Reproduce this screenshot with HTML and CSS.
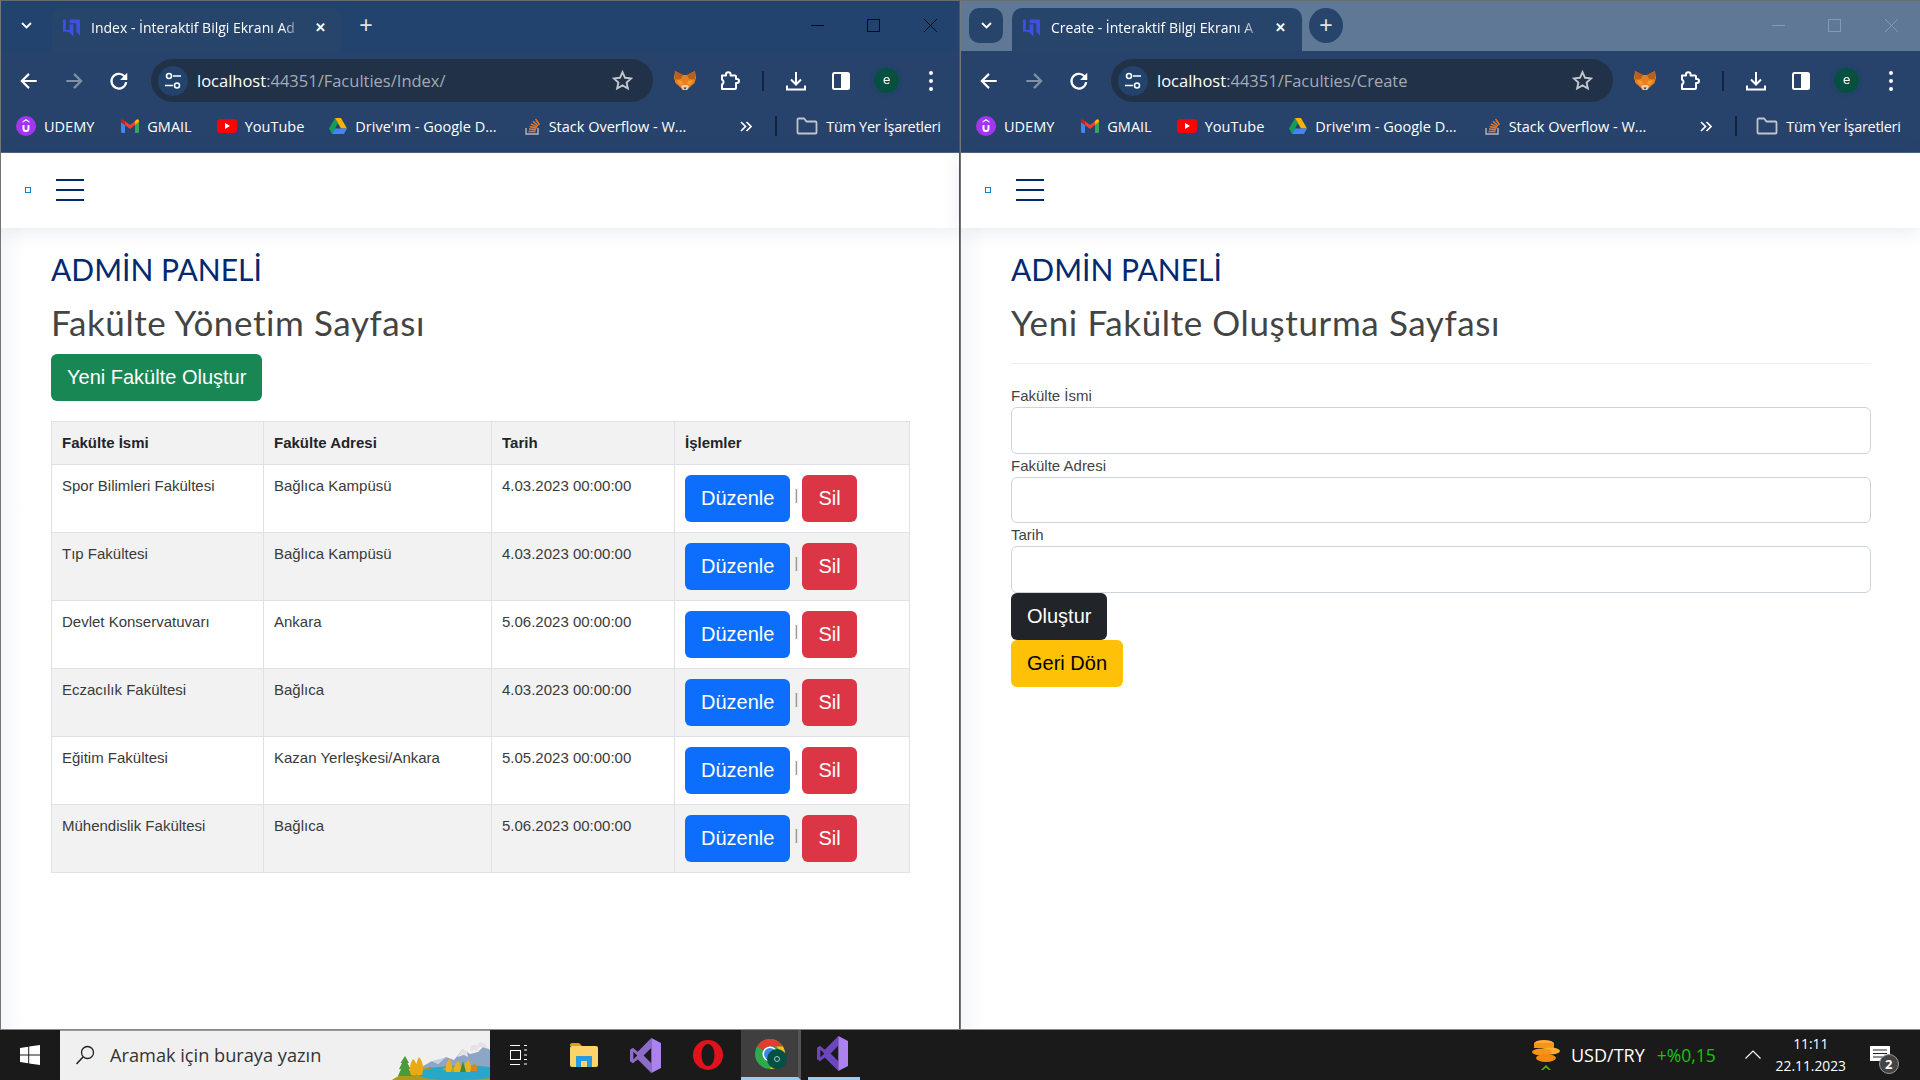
FILE: index.html
```html
<!DOCTYPE html>
<html lang="tr">
<head>
    <meta charset="UTF-8">
    <meta name="viewport" content="width=device-width, initial-scale=1.0">
    <title>Fakülte Yönetimi</title>
    <link rel="stylesheet" href="styles.css">
</head>
<body>
    <svg class="defs" width="0" height="0">
        <symbol id="i-fav" viewBox="0 0 20 20"><path d="M1 1v13h6l5 5V6H8v6H4V1zM8 1h11v17l-4-4V5H8z" fill="#3d50e0"/></symbol>
        <symbol id="i-back" viewBox="0 0 20 20"><path d="M17 10H4M10 3.500 3.500 10l6.500 6.500" fill="none" stroke="currentColor" stroke-width="2"/></symbol>
        <symbol id="i-fwd" viewBox="0 0 20 20"><path d="M3 10h13M10 3.500l6.500 6.500-6.500 6.500" fill="none" stroke="currentColor" stroke-width="2"/></symbol>
        <symbol id="i-reload" viewBox="0 0 20 20"><path d="M16.500 11a6.700 6.700 0 1 1-1.800-5.500L16.500 7.500" fill="none" stroke="#fff" stroke-width="2"/><path d="M17.500 2.500v6.500H11z" fill="#fff"/></symbol>
        <symbol id="i-tune" viewBox="0 0 30 30"><circle cx="15" cy="15" r="15" fill="#23436c"/><circle cx="11" cy="10" r="2.500" fill="none" stroke="#fff" stroke-width="1.600"/><circle cx="19" cy="19.500" r="2.500" fill="none" stroke="#fff" stroke-width="1.600"/><path d="M15 10h8M7 19.500h8" stroke="#fff" stroke-width="1.600"/></symbol>
        <symbol id="i-star" viewBox="0 0 20 20"><path d="M10 2l2.400 5.400 5.800.6-4.300 3.900 1.200 5.700L10 14.700l-5.100 2.900 1.200-5.700L1.800 8l5.800-.6z" fill="none" stroke="#c4c8cd" stroke-width="1.800"/></symbol>
        <symbol id="i-fox" viewBox="0 0 22 20"><path d="M1 0l8 4h4l8-4 1 7-1.500 5L16 16l-3 3H9l-3-3-4.500-4L0 7z" fill="#e8801f"/><path d="M1 0l8 4-2 4-6 .5zM21 0l-8 4 2 4 6 .5z" fill="#b9601b"/><path d="M3 9l5 1 1 3-3 1zM19 9l-5 1-1 3 3 1z" fill="#f59a2e"/><path d="M7 15l2-1h4l2 1-2 4H9z" fill="#e3d2c0"/><path d="M9.500 16.500h3L11 18.500z" fill="#2a2522"/></symbol>
        <symbol id="i-puzzle" viewBox="0 0 22 20"><path d="M3 4.500h4V3.500a2.300 2.300 0 0 1 4.600 0v1H16a1 1 0 0 1 1 1V8h1a2 2 0 0 1 0 4h-1v5a1 1 0 0 1-1 1H3v-4.500a2.800 2.800 0 0 0 0-5z" fill="none" stroke="#fff" stroke-width="2" stroke-linejoin="round"/></symbol>
        <symbol id="i-down" viewBox="0 0 20 20"><path d="M10 1v12M5 8.500l5 5 5-5M1 14.500V18.500h18v-4" fill="none" stroke="#fff" stroke-width="2"/></symbol>
        <symbol id="i-panel" viewBox="0 0 18 18"><rect x="1" y="1" width="16" height="16" rx="1.500" fill="none" stroke="#fff" stroke-width="2"/><rect x="9" y="1" width="8" height="16" fill="#fff"/></symbol>
        <symbol id="i-udemy" viewBox="0 0 20 20"><circle cx="10" cy="10" r="10" fill="#a435f0"/><path d="M6.500 9v3.500a3.500 3.500 0 0 0 7 0V9h-2v3.500a1.500 1.500 0 0 1-3 0V9zM10 3l3.500 2.400v1.300L10 4.500 6.500 6.700V5.400z" fill="#fff"/></symbol>
        <symbol id="i-gmail" viewBox="0 0 18 14"><path d="M0 3v9.500A1.500 1.500 0 0 0 1.500 14H4V6z" fill="#4285f4"/><path d="M14 6v8h2.500a1.500 1.500 0 0 0 1.500-1.500V3z" fill="#34a853"/><path d="M4 6v-4L9 6l5-4v4L9 10z" fill="#ea4335"/><path d="M0 3l4 3V2L2.500.7C1.300-.2 0 .8 0 2z" fill="#c5221f"/><path d="M14 2v4l4-3V2c0-1.200-1.300-2.200-2.500-1.300z" fill="#fbbc04"/></symbol>
        <symbol id="i-yt" viewBox="0 0 20 14"><rect width="20" height="14" rx="3.500" fill="#f00"/><path d="M8 4l5 3-5 3z" fill="#fff"/></symbol>
        <symbol id="i-drive" viewBox="0 0 18 16"><path d="M6 0l3 5.300L3 16l-3-5.500z" fill="#0f9d58"/><path d="M6 0h6l6 10.500h-6z" fill="#f4b400"/><path d="M3 16l3-5.500h12L15 16z" fill="#4285f4"/></symbol>
        <symbol id="i-so" viewBox="0 0 16 18"><path d="M1 11v6h12v-6" fill="none" stroke="#b5b6b8" stroke-width="1.400"/><path d="M3.500 14.500h7M4 12l7 .7M4.700 9.500l6.800 1.800M6 6.800l6.200 3.400M8 4.300l5.200 4.700M10.500 2l4 5.800" stroke="#e8792b" stroke-width="1.500" fill="none"/></symbol>
        <symbol id="i-folder" viewBox="0 0 22 18"><path d="M1.500 2.500A1 1 0 0 1 2.500 1.500h5.500l2.500 3h9a1 1 0 0 1 1 1v10a1 1 0 0 1-1 1h-17a1 1 0 0 1-1-1z" fill="none" stroke="#bfc5cc" stroke-width="1.800"/></symbol>
        <symbol id="i-vs" viewBox="0 0 32 36"><path fill-rule="evenodd" d="M22 0v36L8 22l-5 4-3-2V12l3-2 5 4zM22 10l-8 8 8 8zM3.500 14v8l4-4z" fill="currentColor"/><path d="M22 0l10 5v26l-10 5z" fill="#ab82ee"/></symbol>
    </svg>

    <div class="screen">
        <div class="windows">
            <section class="window window-left">
                <div class="tabstrip">
                    <span class="tab-list"><svg width="11" height="7" viewBox="0 0 11 7"><path d="M1 1l4.500 4.500L10 1" fill="none" stroke="#fff" stroke-width="1.800"/></svg></span>
                    <div class="tab">
                        <svg class="tab-icon"><use href="#i-fav"/></svg>
                        <span class="tab-title">Index - İnteraktif Bilgi Ekranı Ad</span>
                        <span class="tab-close">✕</span>
                    </div>
                    <span class="tab-new">+</span>
                    <div class="win-controls">
                        <span class="win-min"></span>
                        <span class="win-max"></span>
                        <svg class="win-x" width="13" height="13" viewBox="0 0 13 13"><path d="M0 0l13 13M13 0L0 13" stroke="currentColor" stroke-width="1"/></svg>
                    </div>
                </div>
                <div class="toolbar">
                    <svg class="nav-btn"><use href="#i-back"/></svg>
                    <svg class="nav-btn nav-off"><use href="#i-fwd"/></svg>
                    <svg class="nav-btn"><use href="#i-reload"/></svg>
                    <div class="omnibox">
                        <svg class="tune"><use href="#i-tune"/></svg>
                        <span class="url"><b>localhost</b>:44351/Faculties/Index/</span>
                        <svg class="star"><use href="#i-star"/></svg>
                    </div>
                    <svg class="ext-fox"><use href="#i-fox"/></svg>
                    <svg class="ext-puzzle"><use href="#i-puzzle"/></svg>
                    <span class="tool-sep"></span>
                    <svg class="tool-down"><use href="#i-down"/></svg>
                    <svg class="tool-panel"><use href="#i-panel"/></svg>
                    <span class="avatar">e</span>
                    <span class="dots"><i></i><i></i><i></i></span>
                </div>
                <div class="bookmarks">
                    <a class="bm bm-udemy"><svg><use href="#i-udemy"/></svg>UDEMY</a>
                    <a class="bm bm-gmail"><svg><use href="#i-gmail"/></svg>GMAIL</a>
                    <a class="bm bm-yt"><svg><use href="#i-yt"/></svg>YouTube</a>
                    <a class="bm bm-drive"><svg><use href="#i-drive"/></svg>Drive'ım - Google D...</a>
                    <a class="bm bm-so"><svg><use href="#i-so"/></svg>Stack Overflow - W...</a>
                    <svg class="bm-more" width="12" height="11" viewBox="0 0 12 11"><path d="M1 1l4.500 4.500L1 10M6.500 1L11 5.500 6.500 10" fill="none" stroke="#fff" stroke-width="1.700"/></svg>
                    <span class="bm-sep"></span>
                    <a class="bm bm-all"><svg><use href="#i-folder"/></svg>Tüm Yer İşaretleri</a>
                </div>
                <div class="page">
                    <nav class="site-nav">
                        <span class="broken-logo"></span>
                        <span class="burger"><i></i><i></i><i></i></span>
                    </nav>
                    <main class="content">
                        <h1 class="panel-title">ADMİN PANELİ</h1>
                        <h2 class="page-title">Fakülte Yönetim Sayfası</h2>
                        <a class="btn btn-green btn-new">Yeni Fakülte Oluştur</a>
                        <table class="data-table">
                            <thead>
                                <tr>
                                    <th class="col-name">Fakülte İsmi</th>
                                    <th class="col-addr">Fakülte Adresi</th>
                                    <th class="col-date">Tarih</th>
                                    <th>İşlemler</th>
                                </tr>
                            </thead>
                            <tbody>
                                <tr>
                                    <td>Spor Bilimleri Fakültesi</td>
                                    <td>Bağlıca Kampüsü</td>
                                    <td>4.03.2023 00:00:00</td>
                                    <td class="actions"><a class="btn btn-blue">Düzenle</a><span class="pipe">|</span><a class="btn btn-red">Sil</a></td>
                                </tr>
                                <tr>
                                    <td>Tıp Fakültesi</td>
                                    <td>Bağlıca Kampüsü</td>
                                    <td>4.03.2023 00:00:00</td>
                                    <td class="actions"><a class="btn btn-blue">Düzenle</a><span class="pipe">|</span><a class="btn btn-red">Sil</a></td>
                                </tr>
                                <tr>
                                    <td>Devlet Konservatuvarı</td>
                                    <td>Ankara</td>
                                    <td>5.06.2023 00:00:00</td>
                                    <td class="actions"><a class="btn btn-blue">Düzenle</a><span class="pipe">|</span><a class="btn btn-red">Sil</a></td>
                                </tr>
                                <tr>
                                    <td>Eczacılık Fakültesi</td>
                                    <td>Bağlıca</td>
                                    <td>4.03.2023 00:00:00</td>
                                    <td class="actions"><a class="btn btn-blue">Düzenle</a><span class="pipe">|</span><a class="btn btn-red">Sil</a></td>
                                </tr>
                                <tr>
                                    <td>Eğitim Fakültesi</td>
                                    <td>Kazan Yerleşkesi/Ankara</td>
                                    <td>5.05.2023 00:00:00</td>
                                    <td class="actions"><a class="btn btn-blue">Düzenle</a><span class="pipe">|</span><a class="btn btn-red">Sil</a></td>
                                </tr>
                                <tr>
                                    <td>Mühendislik Fakültesi</td>
                                    <td>Bağlıca</td>
                                    <td>5.06.2023 00:00:00</td>
                                    <td class="actions"><a class="btn btn-blue">Düzenle</a><span class="pipe">|</span><a class="btn btn-red">Sil</a></td>
                                </tr>
                            </tbody>
                        </table>
                    </main>
                </div>
            </section>

            <section class="window window-right">
                <div class="tabstrip">
                    <span class="tab-list"><svg width="11" height="7" viewBox="0 0 11 7"><path d="M1 1l4.500 4.500L10 1" fill="none" stroke="#fff" stroke-width="1.800"/></svg></span>
                    <div class="tab">
                        <svg class="tab-icon"><use href="#i-fav"/></svg>
                        <span class="tab-title">Create - İnteraktif Bilgi Ekranı A</span>
                        <span class="tab-close">✕</span>
                    </div>
                    <span class="tab-new">+</span>
                    <div class="win-controls">
                        <span class="win-min"></span>
                        <span class="win-max"></span>
                        <svg class="win-x" width="13" height="13" viewBox="0 0 13 13"><path d="M0 0l13 13M13 0L0 13" stroke="currentColor" stroke-width="1"/></svg>
                    </div>
                </div>
                <div class="toolbar">
                    <svg class="nav-btn"><use href="#i-back"/></svg>
                    <svg class="nav-btn nav-off"><use href="#i-fwd"/></svg>
                    <svg class="nav-btn"><use href="#i-reload"/></svg>
                    <div class="omnibox">
                        <svg class="tune"><use href="#i-tune"/></svg>
                        <span class="url"><b>localhost</b>:44351/Faculties/Create</span>
                        <svg class="star"><use href="#i-star"/></svg>
                    </div>
                    <svg class="ext-fox"><use href="#i-fox"/></svg>
                    <svg class="ext-puzzle"><use href="#i-puzzle"/></svg>
                    <span class="tool-sep"></span>
                    <svg class="tool-down"><use href="#i-down"/></svg>
                    <svg class="tool-panel"><use href="#i-panel"/></svg>
                    <span class="avatar">e</span>
                    <span class="dots"><i></i><i></i><i></i></span>
                </div>
                <div class="bookmarks">
                    <a class="bm bm-udemy"><svg><use href="#i-udemy"/></svg>UDEMY</a>
                    <a class="bm bm-gmail"><svg><use href="#i-gmail"/></svg>GMAIL</a>
                    <a class="bm bm-yt"><svg><use href="#i-yt"/></svg>YouTube</a>
                    <a class="bm bm-drive"><svg><use href="#i-drive"/></svg>Drive'ım - Google D...</a>
                    <a class="bm bm-so"><svg><use href="#i-so"/></svg>Stack Overflow - W...</a>
                    <svg class="bm-more" width="12" height="11" viewBox="0 0 12 11"><path d="M1 1l4.500 4.500L1 10M6.500 1L11 5.500 6.500 10" fill="none" stroke="#fff" stroke-width="1.700"/></svg>
                    <span class="bm-sep"></span>
                    <a class="bm bm-all"><svg><use href="#i-folder"/></svg>Tüm Yer İşaretleri</a>
                </div>
                <div class="page">
                    <nav class="site-nav">
                        <span class="broken-logo"></span>
                        <span class="burger"><i></i><i></i><i></i></span>
                    </nav>
                    <main class="content">
                        <h1 class="panel-title">ADMİN PANELİ</h1>
                        <h2 class="page-title">Yeni Fakülte Oluşturma Sayfası</h2>
                        <hr class="rule">
                        <form class="create-form">
                            <label>Fakülte İsmi</label>
                            <input type="text">
                            <label>Fakülte Adresi</label>
                            <input type="text">
                            <label>Tarih</label>
                            <input type="text">
                            <div><button type="button" class="btn btn-dark">Oluştur</button></div>
                            <div><a class="btn btn-yellow">Geri Dön</a></div>
                        </form>
                    </main>
                </div>
            </section>
        </div>

        <footer class="taskbar">
            <svg class="start" width="20" height="20" viewBox="0 0 20 20"><path d="M0 3l8.200-1.200v7.700H0zM9.200 1.600L20 0v9.500H9.200zM0 10.500h8.200v7.700L0 17zM9.200 10.500H20V20L9.200 18.400z" fill="#fff"/></svg>
            <div class="search">
                <svg width="20" height="20" viewBox="0 0 20 20"><circle cx="12.500" cy="7.500" r="6" fill="none" stroke="#222" stroke-width="1.300"/><path d="M8 12L1.500 19" stroke="#222" stroke-width="1.500"/></svg>
                <span class="search-text">Aramak için buraya yazın</span>
                <svg class="scene" width="100" height="50" viewBox="0 0 100 50">
                    <path d="M28 38l14-8 6 3 8-7 8 3 9-11 7 5 8-2 6-6 6 4 6 6v20H28z" fill="#8ea6c6"/>
                    <path d="M73 18l-6 8 7-2 4 2-1-6zM81 14l-1 6 5-1 4 1-3-6zM90 11l-5 6 7-1 6 2-3-5z" fill="#e9dfe6"/>
                    <path d="M42 30l6 3 8-7-6 2z" fill="#c5cfe0"/>
                    <path d="M0 50l12-7 28-7h60v14z" fill="#ad9a1e"/>
                    <path d="M30 41c12-6 40-8 70-5v11c-24 3-60 3-68-1-4-2-4-3-2-5z" fill="#29a7c9"/>
                    <path d="M52 38c8-3 26-4 33-2l-5 4c-10 2-24 1-28-2z" fill="#b5a526"/>
                    <path d="M15 25l4 7-1.500 0 3 6H19l3 7H8l3-7H9l3-6h-1.500z" fill="#4c9a3a"/>
                    <path d="M23 28c4 3 5 11 3 16h-5c-2-5-1-12 2-16zM29 26c4 4 5 12 3 18h-5c-2-6-1-13 2-18z" fill="#e8ab16"/>
                    <path d="M59 28c3 2 4 10 2 13h-5c-1-4 0-9 3-13zM68 30c3 2 4 8 2 11h-6c-1-3 1-8 4-11zM78 29c3 2 4 9 2 12h-6c-1-4 1-9 4-12z" fill="#eab31c"/>
                    <path d="M73 30l3 11h-6z" fill="#3f8a3e"/>
                    <path d="M84 33c3 1 4 5 3 7h-6c-1-2 1-6 3-7z" fill="#d9861c"/>
                </svg>
            </div>
            <svg class="tb-task" width="20" height="20" viewBox="0 0 20 20"><path d="M0 .5h10M0 19.500h10M14 .5h3M14 5h3M14 10h3M14 14.500h3M14 19h3" stroke="#fff"/><rect x=".5" y="5.500" width="10" height="9" fill="none" stroke="#fff"/></svg>
            <svg class="tb-files" width="28" height="24" viewBox="0 0 28 24"><path d="M0 2a2 2 0 0 1 2-2h7l3 3H0z" fill="#e0a000"/><rect y="3" width="28" height="21" rx="2" fill="#fdd46a"/><path fill-rule="evenodd" d="M6 24V13h16v11h-5v-6h-6v6z" fill="#2a9be0"/></svg>
            <svg class="tb-vs tb-vs-first"><use href="#i-vs"/></svg>
            <svg class="tb-opera" width="30" height="30" viewBox="0 0 30 30"><path fill-rule="evenodd" d="M15 0a15 15 0 1 0 0 30 15 15 0 0 0 0-30zm0 4c4 0 6.500 5 6.500 11S19 26 15 26s-6.500-5-6.500-11S11 4 15 4z" fill="#e2121d"/></svg>
            <div class="tb-active tb-chrome">
                <svg width="32" height="30" viewBox="0 0 32 30">
                    <circle cx="15" cy="15" r="15" fill="#2fa84f"/>
                    <path d="M15 0a15 15 0 0 1 13 7.500H15a7.500 7.500 0 0 0-6.500 3.700L2 7.500A15 15 0 0 1 15 0z" fill="#e53b30"/>
                    <path d="M28 7.500a15 15 0 0 1-13 22.500l6.500-11.200a7.500 7.500 0 0 0 0-11.300z" fill="#fbc116"/>
                    <circle cx="15" cy="15" r="7.500" fill="#fff"/>
                    <circle cx="15" cy="15" r="6" fill="#3f83ee"/>
                    <circle cx="22" cy="20" r="10" fill="#065043"/>
                    <circle cx="22" cy="20" r="2.500" fill="none" stroke="#9cc" stroke-width="1"/>
                </svg>
            </div>
            <div class="tb-active tb-vs2"><svg><use href="#i-vs"/></svg></div>
            <div class="tray">
                <svg class="coin" width="28" height="30" viewBox="0 0 28 30"><ellipse cx="12" cy="3.500" rx="10" ry="3.500" fill="#ffad33"/><rect x="2" y="3" width="20" height="5" fill="#f59417"/><ellipse cx="18" cy="11" rx="10" ry="3.500" fill="#ffad33"/><ellipse cx="10" cy="12" rx="10" ry="3.500" fill="#f59417"/><ellipse cx="14" cy="18" rx="10" ry="4" fill="#f08a10"/><path d="M9 30l5-5 5 5-2 0-3-2.500L11 30z" fill="#58b21b"/></svg>
                <span class="ticker">USD/TRY</span>
                <span class="ticker-up">+%0,15</span>
                <svg class="caret" width="16" height="9" viewBox="0 0 16 9"><path d="M.5 8.500L8 1l7.500 7.500" fill="none" stroke="#fff" stroke-width="1.200"/></svg>
                <div class="clock"><span>11:11</span><span>22.11.2023</span></div>
                <div class="notify">
                    <svg width="20" height="17" viewBox="0 0 20 17"><path d="M0 0h20v15H0z" fill="#fff"/><path d="M3 4h14M3 7.500h14M3 11h10" stroke="#222" stroke-width="1"/></svg>
                    <span class="notify-count">2</span>
                </div>
            </div>
        </footer>
    </div>
</body>
</html>
```

FILE: styles.css
```css
* {
    box-sizing: border-box;
}
html, body {
    margin: 0;
    padding: 0;
    overflow: hidden;
}
body {
    font-family: "Liberation Sans", Arial, sans-serif;
    background: #fff;
}
.defs {
    position: absolute;
}
.screen {
    width: 1920px;
    height: 1080px;
    display: flex;
    flex-direction: column;
}
.windows {
    display: flex;
    height: 1030px;
    border-bottom: 1px solid #888;
}
.window {
    width: 960px;
    display: flex;
    flex-direction: column;
    border-left: 1px solid #777;
    border-top: 1px solid #6b6b6b;
}
.window-left {
    border-right: 1px solid #555;
}

/* browser chrome */
.tabstrip {
    height: 50px;
    display: flex;
    align-items: flex-start;
    padding: 7px 0 0 8px;
    background: #21436d;
    color: #fff;
}
.window-right .tabstrip {
    background: #5f7896;
}
.tab-list {
    width: 34px;
    height: 35px;
    border-radius: 10px;
    display: flex;
    align-items: center;
    justify-content: center;
}
.window-right .tab-list, .window-right .tab-new {
    background: #27446b;
}
.tab {
    width: 290px;
    height: 43px;
    margin-left: 9px;
    padding: 0 10px 4px 10px;
    border-radius: 10px 10px 0 0;
    background: #27446b;
    display: flex;
    align-items: center;
}
.tab-icon {
    width: 19px;
    height: 20px;
    flex: none;
}
.tab-title {
    width: 212px;
    margin-left: 10px;
    font-family: "Open Sans", sans-serif;
    font-size: 14px;
    white-space: nowrap;
    -webkit-mask-image: linear-gradient(90deg, #000 90%, transparent);
    mask-image: linear-gradient(90deg, #000 90%, transparent);
}
.tab-close {
    margin-left: 12px;
    font-size: 13px;
    font-weight: bold;
}
.tab-new {
    width: 34px;
    height: 35px;
    margin-left: 7px;
    border-radius: 50%;
    font-size: 23px;
    line-height: 35px;
    text-align: center;
    color: #dfe3e8;
}
.win-controls {
    margin-left: auto;
    width: 148px;
    height: 35px;
    display: flex;
    align-items: center;
    color: #0c0c0c;
}
.window-right .win-controls {
    color: #8799ae;
}
.win-min {
    width: 13px;
    height: 1px;
    background: currentColor;
}
.win-max {
    width: 13px;
    height: 13px;
    margin-left: 43px;
    border: 1px solid currentColor;
}
.win-x {
    margin-left: 44px;
}
.toolbar {
    height: 59px;
    display: flex;
    align-items: center;
    padding: 0 0 0 17px;
    background: #27436b;
}
.nav-btn {
    width: 22px;
    height: 22px;
    margin-right: 23px;
    color: #fff;
    flex: none;
}
.nav-off {
    color: #8090a6;
}
.omnibox {
    width: 502px;
    height: 43px;
    margin-left: -2px;
    border-radius: 22px;
    background: #213148;
    display: flex;
    align-items: center;
    padding: 0 20px 0 7px;
}
.tune {
    width: 30px;
    height: 30px;
    flex: none;
}
.url {
    margin-left: 9px;
    font-family: "Open Sans", sans-serif;
    font-size: 16.5px;
    color: #a3abb6;
    white-space: nowrap;
}
.url b {
    font-weight: normal;
    color: #fff;
}
.star {
    width: 21px;
    height: 21px;
    margin-left: auto;
}
.ext-fox {
    width: 22px;
    height: 20px;
    margin-left: 21px;
}
.ext-puzzle {
    width: 22px;
    height: 20px;
    margin-left: 23px;
}
.tool-sep {
    width: 2px;
    height: 20px;
    margin-left: 21px;
    background: #13233f;
}
.tool-down {
    width: 20px;
    height: 20px;
    margin-left: 22px;
}
.tool-panel {
    width: 18px;
    height: 18px;
    margin-left: 26px;
}
.avatar {
    width: 25px;
    height: 25px;
    margin-left: 24px;
    border-radius: 50%;
    background: #06503f;
    color: #fff;
    font-size: 13px;
    line-height: 24px;
    text-align: center;
    box-shadow: 0 0 0 4px #234269;
}
.dots {
    margin-left: 30px;
    display: flex;
    flex-direction: column;
    gap: 4px;
}
.dots i {
    width: 4px;
    height: 4px;
    border-radius: 50%;
    background: #fff;
}
.bookmarks {
    height: 43px;
    padding: 0 0 10px 15px;
    display: flex;
    align-items: center;
    background: #27436b;
    border-bottom: 1px solid #4a6786;
    color: #fff;
    font-family: "Open Sans", sans-serif;
    font-size: 14.5px;
    white-space: nowrap;
}
.bm {
    display: flex;
    align-items: center;
}
.bm svg {
    margin-right: 8px;
    flex: none;
}
.bm-udemy svg {
    width: 20px;
    height: 20px;
}
.bm-gmail {
    margin-left: 27px;
}
.bm-gmail svg {
    width: 18px;
    height: 14px;
}
.bm-yt {
    margin-left: 25px;
}
.bm-yt svg {
    width: 20px;
    height: 14px;
}
.bm-drive {
    margin-left: 25px;
}
.bm-drive svg {
    width: 18px;
    height: 16px;
}
.bm-so {
    margin-left: 28px;
}
.bm-so svg {
    width: 16px;
    height: 18px;
}
.bm-more {
    margin-left: 54px;
    flex: none;
}
.bm-sep {
    width: 2px;
    height: 20px;
    margin-left: 23px;
    background: #13233f;
}
.bm-all {
    margin-left: 19px;
    letter-spacing: -.3px;
}
.bm-all svg {
    width: 22px;
    height: 18px;
}

/* admin page */
.page {
    flex: 1;
    background: linear-gradient(90deg, #f6f7fa, #fff 24px);
    min-height: 0;
}
.site-nav {
    height: 75px;
    padding: 0 0 2px 24px;
    display: flex;
    align-items: center;
    background: #fff;
    box-shadow: 0 2px 20px rgba(1, 41, 112, .1);
}
.broken-logo {
    width: 6px;
    height: 6px;
    border: 1px solid #0d82d0;
}
.burger {
    margin-left: 25px;
    display: flex;
    flex-direction: column;
    gap: 8px;
}
.burger i {
    width: 28px;
    height: 2px;
    background: #012970;
}
.content {
    padding: 23px 49px 0 50px;
}
.panel-title {
    margin: 0;
    height: 36px;
    font-family: Lato, sans-serif;
    font-size: 30px;
    font-weight: 400;
    line-height: 36px;
    color: #012970;
}
.page-title {
    margin: 15px 0 0;
    height: 40px;
    font-family: Lato, sans-serif;
    font-size: 35px;
    font-weight: 400;
    line-height: 40px;
    letter-spacing: .6px;
    color: #444;
}
.btn {
    display: inline-block;
    height: 47px;
    padding: 0 16px;
    border: none;
    border-radius: 6px;
    font-family: "Liberation Sans", Arial, sans-serif;
    font-size: 20px;
    line-height: 47px;
    color: #fff;
    text-align: center;
}
.btn-new {
    margin-top: 12px;
}
.btn-green {
    background: #198754;
}
.btn-blue {
    background: #0d6efd;
}
.btn-red {
    min-width: 55px;
    background: #dc3545;
}
.btn-dark {
    background: #212529;
}
.btn-yellow {
    background: #ffc107;
    color: #000;
}
.data-table {
    width: 859px;
    margin-top: 20px;
    border-collapse: collapse;
    table-layout: fixed;
    font-size: 15px;
    color: #3a3a3a;
}
.data-table th, .data-table td {
    border: 1px solid #dee2e6;
    padding: 12px 10px 9px;
    text-align: left;
    vertical-align: top;
}
.data-table th {
    height: 43px;
    color: #212529;
    background: #f2f2f2;
}
.data-table td {
    height: 68px;
}
.col-name {
    width: 212px;
}
.col-addr {
    width: 228px;
}
.col-date {
    width: 183px;
}
.data-table tbody tr:nth-child(even) td {
    background: #f2f2f2;
}
.data-table td.actions {
    padding: 10px 10px 0;
    white-space: nowrap;
}
.pipe {
    margin: 0 4px;
    color: #8a8a60;
    font-size: 14px;
    vertical-align: 5px;
}
.rule {
    margin: 21px 0 0;
    border: none;
    border-top: 1px solid #eee;
}
.create-form {
    padding-top: 20px;
}
.create-form label {
    display: block;
    height: 23px;
    font-size: 15px;
    line-height: 23px;
    color: #444;
}
.create-form input {
    display: block;
    width: 100%;
    height: 46.5px;
    border: 1px solid #ced4da;
    border-radius: 6px;
    background: #fff;
}
.create-form div {
    height: 47px;
}

/* taskbar */
.taskbar {
    height: 50px;
    display: flex;
    align-items: center;
    background: #1a1a1a;
    color: #fff;
}
.start {
    margin-left: 20px;
    flex: none;
}
.search {
    width: 430px;
    height: 50px;
    margin-left: 20px;
    padding: 0 0 2px 15px;
    display: flex;
    align-items: center;
    background: #f0f0f0;
    border-top: 1px solid #999;
    position: relative;
    overflow: hidden;
}
.search-text {
    margin-left: 15px;
    font-family: "Open Sans", sans-serif;
    font-size: 18.2px;
    color: #333;
}
.scene {
    position: absolute;
    right: 0;
    top: 0;
}
.tb-task {
    margin-left: 20px;
    flex: none;
}
.tb-files {
    margin-left: 40px;
    flex: none;
}
.tb-vs {
    width: 31px;
    height: 35px;
    margin-left: 32px;
    flex: none;
}
.tb-vs-first {
    color: #8c6cc4;
}
.tb-opera {
    margin-left: 32px;
    flex: none;
}
.tb-active {
    height: 50px;
    display: flex;
    align-items: center;
    justify-content: center;
    border-bottom: 3px solid #99ccf0;
}
.tb-chrome {
    width: 60px;
    margin-left: 18px;
    padding-left: 3px;
    background: #3f3f3f;
    border-right: 3px solid #555;
}
.tb-vs2 {
    width: 52px;
    margin-left: 7px;
    padding-right: 4px;
    color: #6c46bd;
}
.tb-vs2 svg {
    width: 31px;
    height: 35px;
}
.tray {
    margin-left: auto;
    width: 388px;
    height: 50px;
    display: flex;
    align-items: center;
    font-family: "Open Sans", sans-serif;
    padding-bottom: 1px;
}
.ticker {
    margin-left: 11px;
    font-size: 18px;
}
.ticker-up {
    margin-left: 12px;
    font-size: 17.500px;
    color: #16c60c;
}
.caret {
    margin-left: 29px;
}
.clock {
    width: 70px;
    margin-left: 15px;
    display: flex;
    flex-direction: column;
    align-items: center;
    gap: 3px;
    font-size: 13.8px;
    line-height: 19px;
    white-space: nowrap;
}
.notify {
    margin-left: 24px;
    position: relative;
    display: flex;
}
.notify-count {
    position: absolute;
    left: 9px;
    top: 8px;
    width: 20px;
    height: 20px;
    border-radius: 50%;
    background: #444;
    border: 1px solid #999;
    font-size: 13px;
    font-weight: bold;
    line-height: 18px;
    text-align: center;
}
```
